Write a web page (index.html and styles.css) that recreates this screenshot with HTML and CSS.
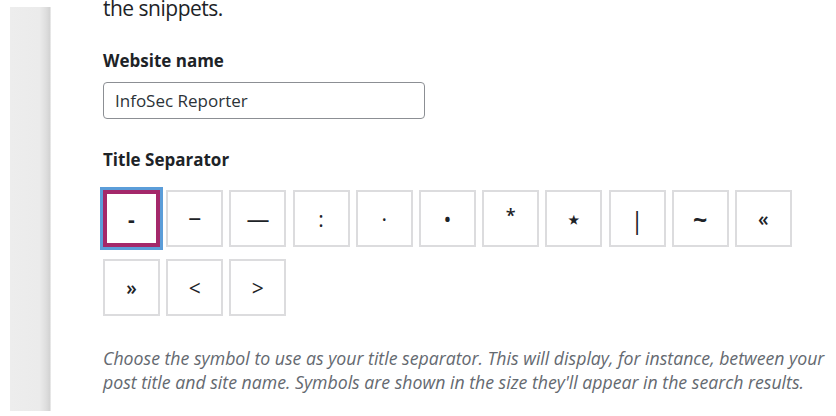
FILE: index.html
```html
<!DOCTYPE html>
<html lang="en">
<head>
<meta charset="utf-8">
<title>Title Separator</title>
<link rel="stylesheet" href="styles.css">
</head>
<body>
<div class="page">
  <aside class="sidebar"></aside>
  <main class="content">
    <p class="intro">the snippets.</p>
    <label class="label" for="site-name">Website name</label>
    <input class="text-input" id="site-name" type="text" value="InfoSec Reporter">
    <div class="label label-sep">Title Separator</div>
    <div class="separators">
      <button class="sep selected" type="button"><span class="glyph g-dash">-</span></button>
      <button class="sep" type="button"><span class="glyph g-ndash">–</span></button>
      <button class="sep" type="button"><span class="glyph g-mdash">—</span></button>
      <button class="sep" type="button"><span class="glyph">:</span></button>
      <button class="sep" type="button"><span class="glyph">·</span></button>
      <button class="sep" type="button"><span class="glyph">•</span></button>
      <button class="sep" type="button"><span class="glyph g-star">*</span></button>
      <button class="sep" type="button"><span class="glyph g-smstar">⋆</span></button>
      <button class="sep" type="button"><span class="glyph g-pipe">|</span></button>
      <button class="sep" type="button"><span class="glyph g-tilde">~</span></button>
      <button class="sep" type="button"><span class="glyph g-quote">«</span></button>
      <button class="sep" type="button"><span class="glyph g-quote">»</span></button>
      <button class="sep" type="button"><span class="glyph">&lt;</span></button>
      <button class="sep" type="button"><span class="glyph">&gt;</span></button>
    </div>
    <p class="desc">Choose the symbol to use as your title separator. This will display, for instance, between your post title and site name. Symbols are shown in the size they'll appear in the search results.</p>
  </main>
</div>
</body>
</html>
```

FILE: styles.css
```css
* { box-sizing: border-box; }

html, body {
  margin: 0;
  padding: 0;
  background: #ffffff;
  overflow: hidden;
}

body {
  font-family: "Open Sans", "Noto Sans", sans-serif;
  color: #1d2327;
  width: 836px;
  height: 416px;
}

.page {
  display: flex;
  align-items: flex-start;
}

.sidebar {
  flex: 0 0 41px;
  height: 404px;
  margin: 7px 0 0 10px;
  background: linear-gradient(to right, #ededed 0%, #ebebeb 72%, #dedede 88%, #d3d3d3 97%, #f4f4f4 100%);
}

.content {
  flex: 1;
  margin-left: 52px;
  padding-right: 6px;
}

.intro {
  margin: -6px 0 0;
  font-size: 21px;
  line-height: 28px;
  letter-spacing: -0.5px;
  color: #1d2327;
}

.label {
  display: block;
  font-size: 17px;
  line-height: 22px;
  font-weight: 700;
  color: #1d2327;
  margin-top: 28px;
}

.text-input {
  display: block;
  width: 322px;
  height: 37px;
  margin: 10px 0 0;
  padding: 0 11px;
  border: 1px solid #8c8f94;
  border-radius: 4px;
  font-family: inherit;
  font-size: 17px;
  color: #2c3338;
  background: #fff;
}

.label-sep {
  margin-top: 30px;
}

.separators {
  display: flex;
  flex-wrap: wrap;
  column-gap: 6.2px;
  row-gap: 12px;
  margin-top: 19px;
}

.sep {
  width: 57px;
  height: 57px;
  padding: 0;
  margin: 0;
  border: 2px solid #dcdcde;
  background: #fff;
  display: flex;
  align-items: center;
  justify-content: center;
  color: #1d2327;
  font-family: "Open Sans", "DejaVu Sans", sans-serif;
  font-size: 21px;
  cursor: pointer;
}

.sep.selected {
  border: 4px solid #a4286a;
  box-shadow: 0 0 0 3px #5b9dd9;
}

.glyph {
  line-height: 1;
  position: relative;
  top: 1px;
}

.g-dash { font-weight: 700; }
.g-ndash { font-size: 26px; top: -3px; }
.g-mdash { font-size: 23px; }
.g-star { top: -4px; font-size: 18px; font-weight: 600; }
.g-smstar { font-family: "DejaVu Sans", sans-serif; font-size: 28px; }
.g-pipe { font-size: 24px; }
.g-tilde { font-size: 25px; font-weight: 700; }
.g-quote { font-size: 19px; font-weight: 600; }

.desc {
  margin: 30px 0 0;
  font-size: 17.7px;
  line-height: 24px;
  font-style: italic;
  color: #646970;
}
```
